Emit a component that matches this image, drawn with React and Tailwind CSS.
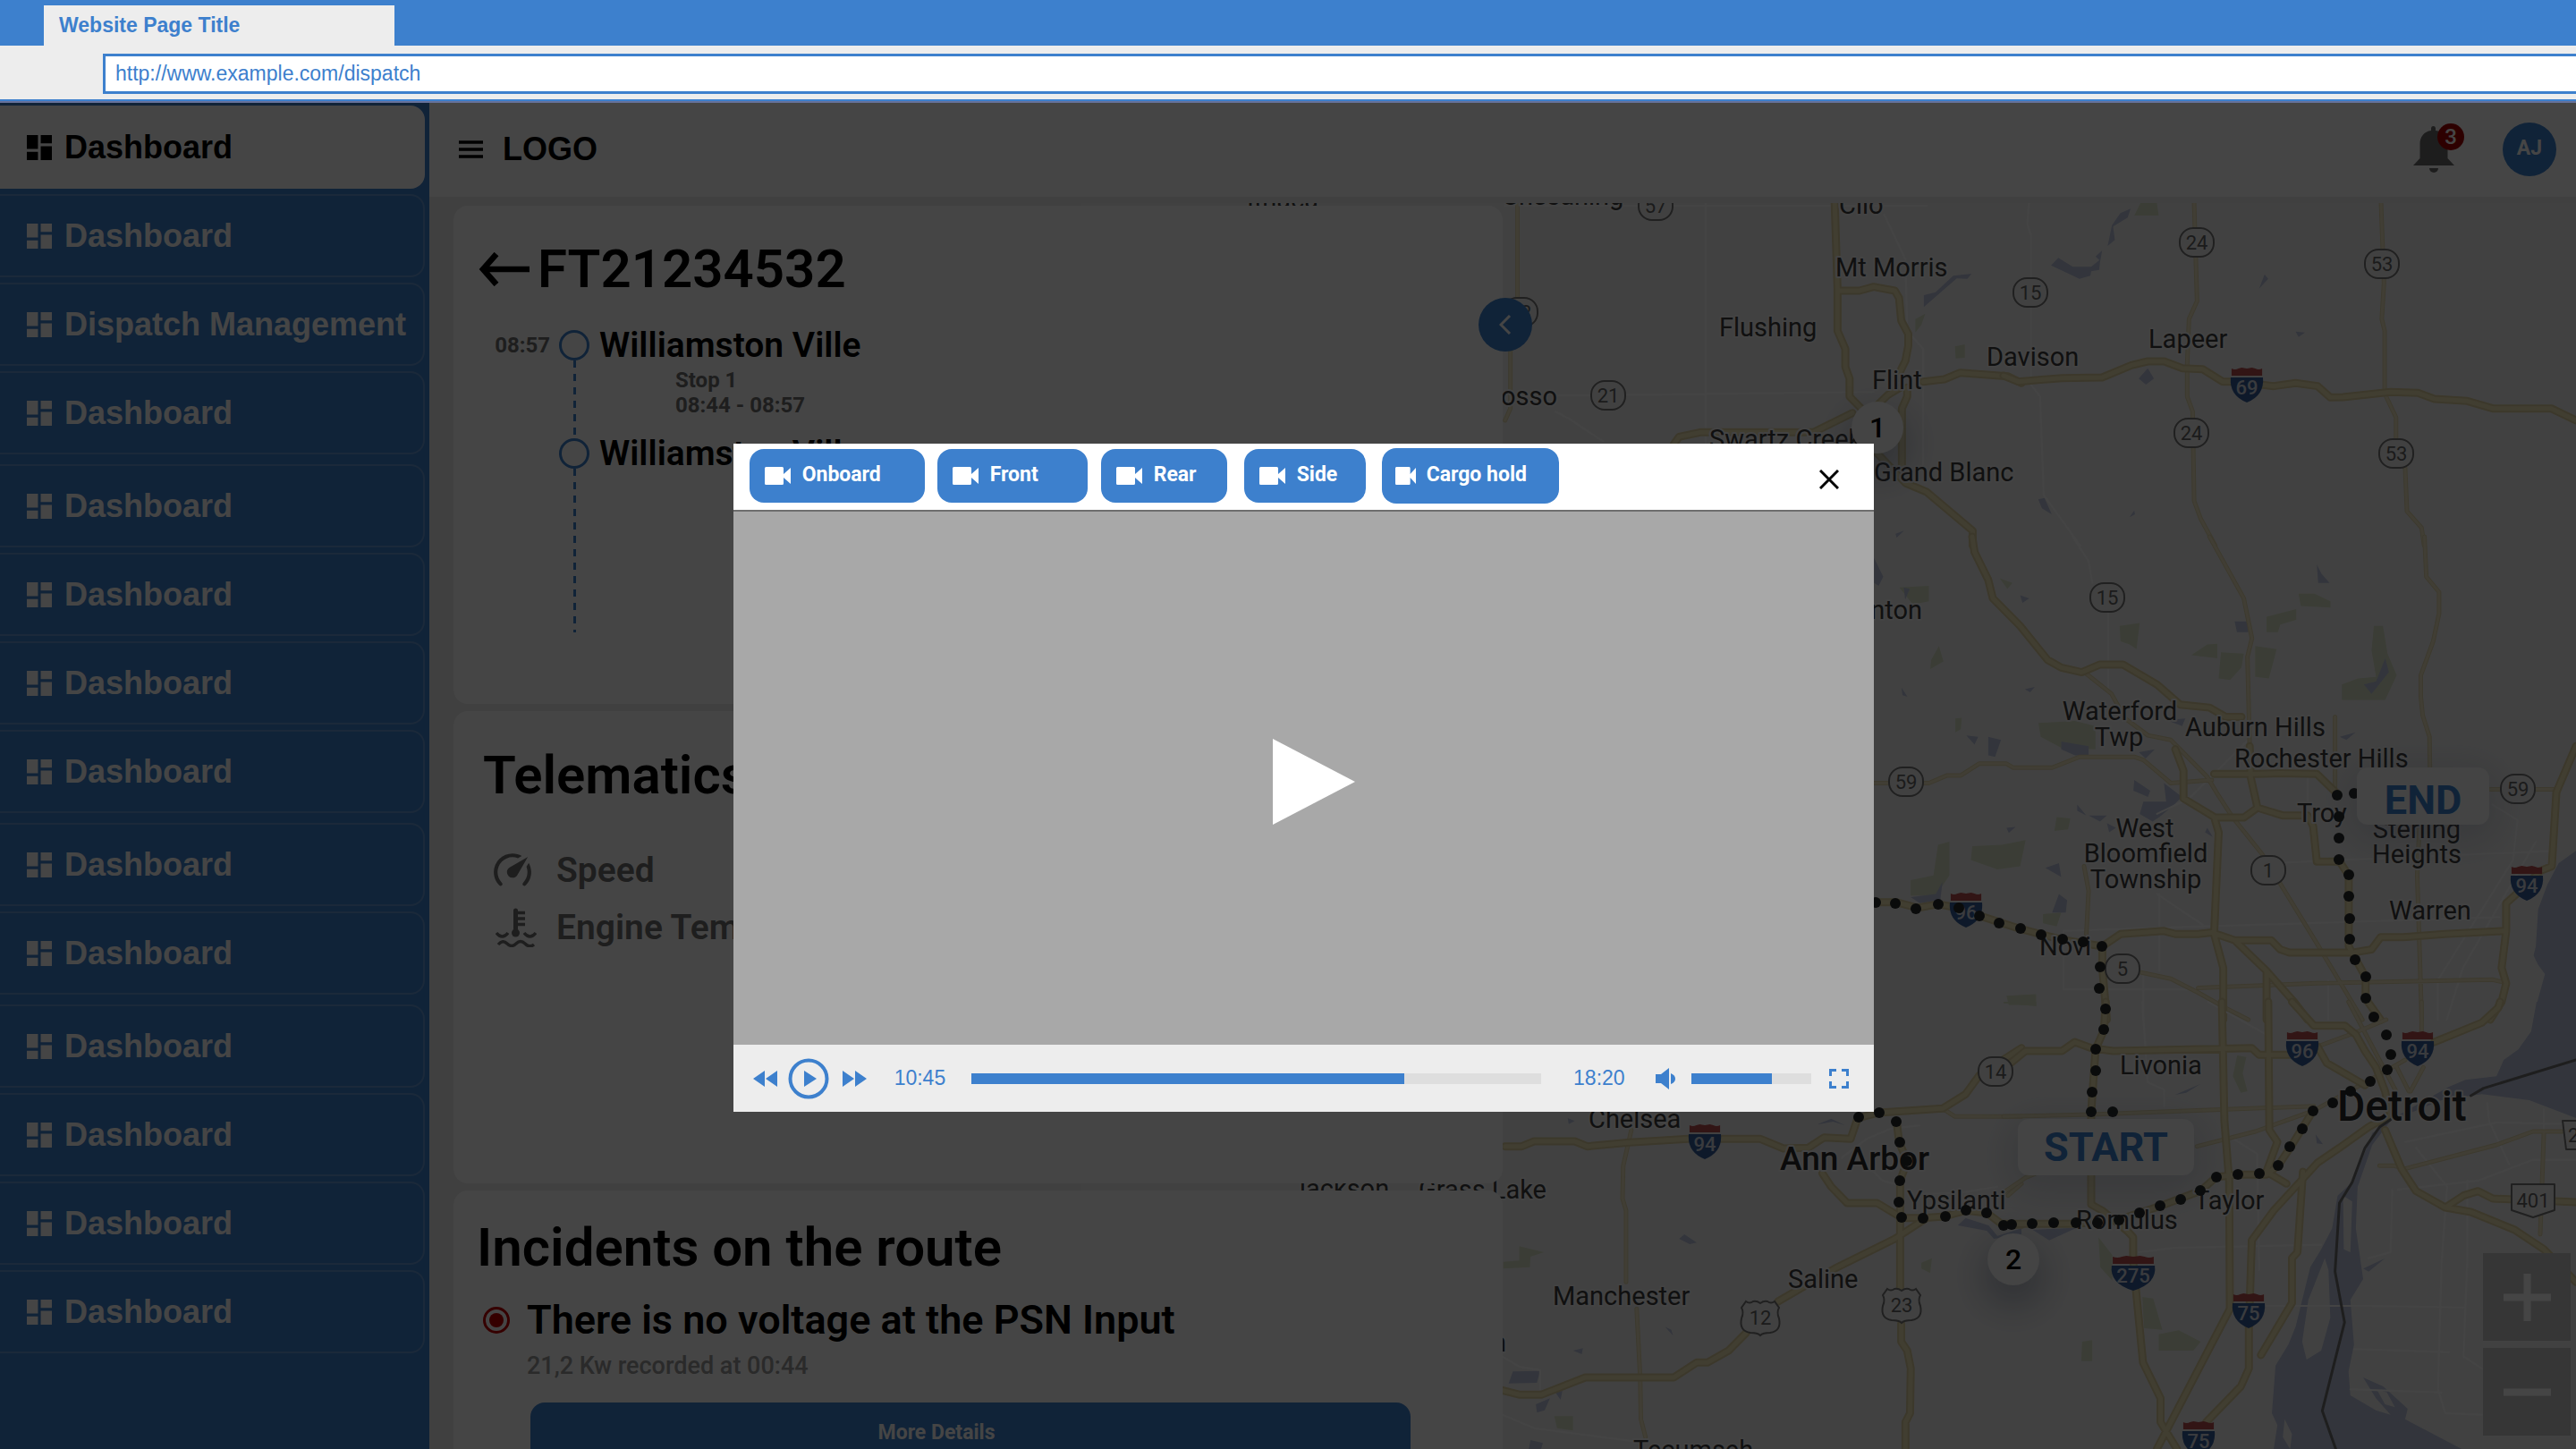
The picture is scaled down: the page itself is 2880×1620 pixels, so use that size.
import React from "react";

const NAV_GROUPS = [
  ["Dashboard", "Dashboard", "Dispatch Management", "Dashboard"],
  ["Dashboard", "Dashboard", "Dashboard", "Dashboard"],
  ["Dashboard", "Dashboard"],
  ["Dashboard", "Dashboard", "Dashboard", "Dashboard"],
];

const CAMERAS = [
  { name: "Onboard", box: "ml-[18px] w-[196px] h-[60px] pl-[17px] gap-[13px]", icon: "w-[29px]" },
  { name: "Front", box: "ml-[14px] w-[168px] h-[60px] pl-[17px] gap-[13px]", icon: "w-[29px]" },
  { name: "Rear", box: "ml-[15px] w-[141px] h-[60px] pl-[17px] gap-[13px]", icon: "w-[29px]" },
  { name: "Side", box: "ml-[19px] w-[136px] h-[60px] pl-[17px] gap-[13px]", icon: "w-[29px]" },
  { name: "Cargo hold", box: "ml-[18px] w-[198px] h-[62px] pl-[15px] gap-[12px]", icon: "w-[23px]" },
];

/* ---------- icons ---------- */

function DashboardIcon() {
  return (
    <svg viewBox="0 0 18 18" className="size-7 shrink-0" fill="currentColor" aria-hidden="true">
      <path d="M0 10h8V0H0v10zm0 8h8v-6H0v6zm10 0h8V8h-8v10zm0-18v6h8V0h-8z" />
    </svg>
  );
}

function CameraIcon({ className }) {
  return (
    <svg viewBox="0 0 29 20" preserveAspectRatio="none" className={className} fill="currentColor" aria-hidden="true">
      <path d="M1.500 0h18a1.500 1.500 0 0 1 1.500 1.500V8l8-7v18l-8-7v6.500a1.500 1.500 0 0 1-1.500 1.500h-18A1.500 1.500 0 0 1 0 18.500v-17A1.500 1.500 0 0 1 1.500 0z" />
    </svg>
  );
}

function SpeedIcon() {
  return (
    <svg viewBox="1 2 22 20" className="h-[42px] w-[46px]" fill="currentColor" aria-hidden="true">
      <path d="M12,16A3,3 0 0,1 9,13C9,11.88 9.61,10.9 10.5,10.39L20.21,4.77L14.68,14.35C14.18,15.33 13.17,16 12,16M12,3C13.81,3 15.5,3.5 16.97,4.32L14.87,5.53C14,5.19 13,5 12,5A8,8 0 0,0 4,13C4,15.21 4.89,17.21 6.34,18.65H6.35C6.74,19.04 6.74,19.67 6.35,20.06C5.96,20.45 5.32,20.45 4.93,20.07C3.12,18.26 2,15.76 2,13A10,10 0 0,1 12,3M22,13C22,15.76 20.88,18.26 19.07,20.07C18.68,20.45 18.05,20.45 17.66,20.06C17.27,19.67 17.27,19.04 17.66,18.65C19.11,17.2 20,15.21 20,13C20,12 19.81,11 19.46,10.1L20.67,8C21.5,9.5 22,11.18 22,13Z" />
    </svg>
  );
}

function CoolantIcon() {
  return (
    <svg viewBox="0 0 46 44" className="h-[44px] w-[46px]" fill="none" stroke="currentColor" aria-hidden="true">
      <path d="M22.500 3v24" strokeWidth="5" strokeLinecap="round" />
      <path d="M25 5.500h8M25 12h8M25 18.500h8" strokeWidth="3.500" />
      <circle cx="22.500" cy="28" r="4.500" fill="currentColor" stroke="none" />
      <path d="M1 28q3 4 6.500 4t6.500-4M32 28q3 4 6.500 4t6.500-4" strokeWidth="3.500" />
      <path d="M3 41q5-6 10 -1t10 0t10 0t10 1" strokeWidth="3.500" />
    </svg>
  );
}

function BellIcon() {
  return (
    <svg viewBox="0 0 46 52" className="h-[52px] w-[46px]" fill="#6b6b6b" aria-hidden="true">
      <path d="M20 5V3a2.500 3 0 0 1 5 0v2c8 1 13.500 7 13.500 15v16L46 44H0l7.500-8V20C7.500 12 12 6 20 5z" />
      <path d="M18 47h10a5 5 0 0 1-10 0z" />
    </svg>
  );
}

/* ---------- map ---------- */

const TILES = [
  {
    transform: "translate(1640 110) scale(.39541 .33333)",
    water: "M1292 700V660L1325 650L1375 595L1427 588L1415 605L1385 604Z M1212 1460L1236 1450L1215 1474Z",
    parks: "M1268 740L1296 722L1285 760L1268 785Z M1380 832L1408 825V870L1382 872Z",
    local: "M108 360H1300 M675 351V1155 M250 997L1150 985 M1180 390L1240 540L1245 780L1290 840V1230 M250 1050L290 1075L385 1150",
    minor: "M143 351V680L123 850V1040L108 1080",
    major:
      "M1040 351L1048 640V780L1070 840V900L1082 940V1000L1115 1040L1160 1100 M1048 645H1110L1150 632L1210 645L1222 670L1228 745L1248 790V830L1240 880L1215 940 M585 1160L600 1135L660 1120H980L1090 1055 M1160 1030L1190 995L1225 970 M1245 970V1000L1230 1040V1230 M1290 950L1350 942L1395 920L1530 932L1568 955 M1160 1190L1240 1290L1300 1320L1430 1450V1500",
  },
  {
    transform: "translate(2240 110) scale(.40816 .33333)",
    water:
      "M130 560L150 535L190 565H240L265 540L262 575L240 580L238 595L208 605Z M348 370L320 385L297 425L285 495L305 475L300 430L340 400Z M270 510L265 545L252 530Z M395 905L412 940L390 960L370 940Z M95 1345L112 1340L132 1395L105 1375Z M715 590L725 605L700 638Z M800 782L826 785L808 800Z M345 1405L358 1382L360 1395Z",
    parks: "M375 351H420L425 393L358 393Z",
    local: "M70 351L65 420L75 460V960L100 1000L110 1330L210 1500",
    minor:
      "M522 351L530 680L508 740L503 890V1000L518 1050L522 1350L540 1410L580 1500 M1034 351L1042 620L1036 740L1044 780V990L1075 1070V1150L1100 1240L1105 1385L1145 1440L1152 1500",
    major:
      "M0 930L40 950L160 938L270 936L350 895L395 882H440L490 905L545 908L600 950H640L740 965L800 955L860 965L895 1003L930 1002L1060 985L1135 988L1180 1008L1270 1015L1340 1040H1500L1568 1080",
  },
  {
    transform: "translate(2080 600) scale(.5102 .34439)",
    water:
      "M1568 1020L1530 1060L1505 1130L1485 1210L1480 1330L1475 1360L1485 1390L1500 1420L1485 1500L1475 1568H1568Z M30 70L50 130L40 160L30 150Z M820 275H850V310H825Z M1000 90L1010 120L1028 150L1003 150Z M435 1160L453 1180L450 1220L420 1220Z M600 790L635 825L630 845L598 825Z M665 800L705 845L680 880L655 910L640 925L612 900L620 860L670 860Z M440 665L500 680V710H470L440 690Z M280 650L308 660L295 715L280 710Z M610 700L645 690L625 720Z M670 595L712 590L705 615Z M475 870L495 905L475 890Z M500 905L540 905L525 925Z M760 945L772 975L755 960Z M405 1075L435 1060L440 1105Z M90 490L103 520L92 515Z M360 495L382 488L372 505Z M350 190L370 200L355 215Z M232 645L258 650L250 675Z M320 945L340 942L325 962Z M540 930L560 945L545 960Z M1050 650L1085 635L1065 660Z M95 165L108 170L98 205Z",
    parks:
      "M85 165L150 160V210L115 220Z M390 605L470 598L515 615V690L440 685L395 650Z M568 290L612 280L605 365L590 350L570 340Z M960 185H995L1030 210V230L965 225Z M890 260L955 235V270L920 285L915 310L890 310Z M725 385L760 350L782 348V395Z M790 375L840 380L835 425L810 465L785 460Z M865 355L912 365L905 405L895 460L865 455Z M1125 290H1145L1155 380L1175 450L1150 530L1055 530V480L1090 460L1130 455L1120 370Z M245 1005L310 1000L362 985L350 1070L300 1080L242 1050Z M110 1115L160 1100L170 1000L195 990V1100L165 1165L110 1165Z M320 1490L385 1485V1520L325 1520Z M155 400L172 355L182 405L153 430Z M400 1225L440 1220L430 1265L400 1255Z M430 910L460 915L455 950L425 955Z M305 135L333 150L322 170Z M208 590L222 588L220 625L208 635Z",
    lakes: "M1150 395L1158 440L1120 510L1103 480L1130 470Z M110 1170L165 1160L180 1120L175 1180L130 1190Z",
    local:
      "M465 0L500 80L508 150 M543 245V500 M900 1060L1520 1020 M445 1280L1400 1235 M445 1470H740 M445 1280V1470 M655 1160V1410 M620 1410V1568 M650 1160L750 1260 M1385 870L1440 920L1430 1050L1265 1440V1568 M1480 990L1320 1400L1285 1568 M980 770V860 M1025 1440V1568 M850 660L720 850L650 900",
    minor:
      "M765 0L840 200L858 330L848 390L853 680 M1236 0L1240 130L1268 180V250L1255 340L1228 450V520L1232 580L1247 650L1248 760L1225 940L1220 1100L1230 1568 M30 800H150L190 775H220L260 737H320L335 750H420L480 715H600L620 725L680 800L770 790 M495 445L550 510L580 590L630 645L680 660L760 780L780 830L815 910L880 1030L1000 1320L1100 1568 M1040 585V830 M490 1070L500 1150L495 1290 M600 1410L680 1435L740 1480L800 1530L850 1568 M740 1465L1000 1450L1385 1438L1405 1445 M1380 820H1530",
    major:
      "M245 0L250 50L280 140L290 200L350 290L410 400L440 425L485 440L525 415H575L650 480L700 545L765 555L800 585H835 M690 690L708 760V850L775 910L785 960L775 1290L795 1400V1568 M775 770H870L920 768L1000 770L1045 835 M853 680L855 780L870 880L925 905H980L992 940L1000 1055H1050L1070 1100V1330L1107 1430V1500L1140 1568 M775 912H840L870 880 M530 1330L570 1290L665 1280L690 1290H740L770 1285L820 1310H900L920 1340L940 1350H1080L1120 1340L1140 1300H1190L1280 1290L1410 1280 M820 1310L890 1410L950 1510L980 1568 M890 1410V1568 M1568 680L1525 830L1515 1070L1490 1085L1460 1130L1415 1190V1280L1405 1400L1415 1450L1405 1510L1380 1568 M30 1187H80L125 1205L170 1193L215 1205L260 1230L350 1273L440 1308L530 1330V1400L540 1568",
  },
  {
    transform: "translate(1640 1140) scale(.39541 .33333)",
    water:
      "M130 1180L207 1178L198 1218L118 1220Z M195 1290L235 1270L220 1310L198 1318Z M250 1250L270 1245L265 1275Z M600 735L615 720L650 748L630 753Z M300 1110L328 1102L325 1122Z M560 1030L578 1040L583 1060Z M1388 690L1410 665L1475 690L1500 725L1568 700V720L1490 735L1470 708Z M180 1410L215 1420L210 1440H175Z M285 330L305 340L288 350Z M990 352L1030 332L1070 355L1035 342Z",
    parks: "M148 760L218 780L180 795L178 830L103 835V812L148 808Z M247 1330H300V1378L255 1370Z M1285 815L1315 800L1310 850L1285 835Z",
    local:
      "M1060 463L1130 400L1200 365L1280 355 M1150 510L1175 540L1215 553 M1290 585L1400 580L1500 560 M100 1130L150 1165L207 1175V1240 M100 1325L190 1370L480 1415",
    minor: "M465 370L442 490L440 600L450 640V880 M480 970L490 1200L492 1340L505 1400 M1345 298L1380 325H1568 M1530 590L1568 550",
    major:
      "M108 425H155L190 408H305L340 425L460 412L625 400H830L895 432L965 430L1010 395L1085 400L1105 330L1165 312L1345 298L1410 250L1450 185L1568 95 M1005 515L1030 560L1075 615H1160L1230 665H1290L1350 660L1410 640L1470 648L1515 688H1568 M1215 340L1222 410L1245 475L1225 540V900 M1228 1020V1080L1245 1110L1255 1170L1253 1320L1240 1350V1440 M1300 665L1210 735L1040 835L880 945 M790 1050L740 1110L680 1150H650L585 1200H335L210 1258H150L100 1243",
  },
  {
    transform: "translate(2240 1120) scale(.40816 .33333)",
    water:
      "M1460 0L1445 100L1410 160L1370 195L1350 250L1265 262L1220 285L1060 395L1010 440L960 600L915 650L900 760L870 830L840 890L800 1090L780 1150L745 1220L740 1300L735 1380L750 1420L740 1500H1255L1100 1400L1020 1370L950 1320L945 1240L960 1150L950 1000L985 930L965 760L970 620L1010 480L1060 400L1200 330L1310 310L1440 330L1568 390V0Z M985 1260L1040 1290L1107 1365L1100 1400L1060 1385L1020 1330Z M80 765L200 758L125 800Z M470 312L540 275L500 305Z M985 895L1045 860L1000 905Z M855 445L875 478L858 475Z",
    land: "M930 650L955 670L950 840L932 830Z M880 860L890 900L895 1060L870 1170L830 1200L818 1140L835 1000Z M1022 1300L1050 1310L1072 1360L1045 1350Z M770 1400L790 1450L785 1500L765 1460Z",
    parks:
      "M260 790L298 850V935L265 890Z M640 180L665 185L655 240L668 300L650 305L628 250Z M380 990L410 995L435 1100L385 1095Z M425 1115L480 1102L540 1140L520 1170L425 1170Z M215 1140L243 1135V1205L213 1205Z M750 1220L775 1250L780 1300L793 1330L775 1370L755 1360Z M0 0H90V15L0 5Z",
    local:
      "M380 0L395 270L440 295V350 M560 0L720 110 M370 840L470 825L870 815 M720 1020H1000L1260 1025 M1325 340L1330 400L1385 545 M1100 470L1350 405L1568 410 M1130 490L1215 620L1200 870L1190 1300L1210 1380L1310 1385 M1080 630L1300 600L1450 530H1568 M1270 600V870L1260 1190L1310 1230 M960 1165L1220 1175 M950 1300L1200 1310 M1480 360V440 M1000 860L1060 840L1065 630 M630 460L695 510L700 900",
    minor:
      "M0 385L240 378L850 350 M530 485L690 435L850 365L1052 229L1100 195 M0 640L60 590L90 575 M945 0L1075 300 M1048 60L960 105L860 150 M1145 0V110 M1150 220L1115 300 M1075 215L1110 300 M1030 550H1070L1100 560L1350 480L1450 435H1530 M1480 440L1470 780",
    major:
      "M0 225L60 165H160L195 135L240 155L300 165L680 155L700 178H790L860 150L885 205L990 280 M598 0L605 400L618 600L620 1030L420 1500 M725 0L728 430L750 470L720 570L775 610 M280 0L275 95L252 160L240 370V680L270 700L340 770L355 790V870L382 1210L430 1330V1410L475 1500 M0 745H200L315 731L430 685L540 634L582 588L640 580H720L753 548L790 480L848 365 M790 0L850 80H935L965 110L990 165L1020 220L1045 300L1060 380L1000 420L920 490L860 540L740 700L680 800L672 1095V1230L650 1290L555 1410 M1180 135L1250 100L1310 70L1355 20L1360 0 M1045 430L1090 560L1130 635L1210 690L1260 650L1300 635L1340 660L1568 672 M1210 690L1280 705L1400 765L1480 830L1568 940 M820 570L805 840L790 860V1010L705 1185",
    border: "M1568 195L1315 290L1280 315 M1060 395L1030 420L990 490L955 605L920 675L908 905L934 1075L873 1372L910 1500",
  },
];

const ROUTE = [
  [2097, 1009], [2119, 1010], [2142, 1016], [2167, 1011], [2190, 1015], [2213, 1024], [2235, 1032], [2259, 1038],
  [2282, 1045], [2306, 1050], [2329, 1053], [2350, 1058], [2348, 1081], [2347, 1105], [2354, 1128], [2352, 1151],
  [2343, 1173], [2343, 1197], [2339, 1221], [2338, 1243], [2362, 1243], [2613, 889], [2632, 887], [2615, 913],
  [2615, 937], [2615, 961], [2626, 978], [2626, 1002], [2627, 1027], [2627, 1050], [2633, 1073], [2645, 1092],
  [2645, 1116], [2654, 1137], [2668, 1157], [2673, 1179], [2669, 1196], [2650, 1209], [2628, 1220], [2608, 1233],
  [2586, 1242], [2574, 1262], [2560, 1282], [2547, 1303], [2526, 1312], [2502, 1313], [2478, 1316], [2460, 1331],
  [2438, 1341], [2415, 1348], [2392, 1356], [2369, 1364], [2345, 1367], [2321, 1367], [2296, 1367], [2272, 1368],
  [2249, 1369], [2240, 1370], [2221, 1356], [2198, 1353], [2175, 1360], [2150, 1362], [2126, 1361], [2123, 1344],
  [2124, 1320], [2132, 1298], [2124, 1277], [2120, 1254], [2101, 1244], [2078, 1249],
];

const PLACES = [
  ["Chesaning", 1679, 229], ["Clio", 2056, 239], ["Mt Morris", 2052, 309], ["Flushing", 1922, 376],
  ["Owosso", 1741, 453, "end"], ["Flint", 2093, 435], ["Swartz Creek", 1911, 501], ["Grand Blanc", 2095, 538],
  ["Davison", 2221, 409], ["Lapeer", 2402, 389], ["Fenton", 2149, 692, "end"], ["Waterford", 2370, 805, "middle"],
  ["Twp", 2369, 834, "middle"], ["Auburn Hills", 2443, 823], ["Rochester Hills", 2498, 858],
  ["West", 2398, 936, "middle"], ["Bloomfield", 2399, 964, "middle"], ["Township", 2399, 993, "middle"],
  ["Troy", 2568, 919], ["Sterling", 2702, 937, "middle"], ["Heights", 2702, 965, "middle"], ["Warren", 2671, 1028],
  ["Novi", 2280, 1068], ["Chelsea", 1776, 1261], ["Ypsilanti", 2132, 1352], ["Grass Lake", 1729, 1340, "end"],
  ["Jackson", 1444, 1339], ["Saline", 1999, 1440], ["Manchester", 1736, 1459], ["Tecumseh", 1826, 1631],
  ["Livonia", 2370, 1201], ["Taylor", 2453, 1352], ["Romulus", 2321, 1374], ["Brooklyn", 1684, 1511, "end"],
  ["Ithaca", 1394, 233],
];

const STATE_ROADS = [
  ["57", 1851, 230], ["52", 1700, 349], ["21", 1798, 442], ["24", 2456, 271], ["53", 2663, 295], ["15", 2270, 327],
  ["24", 2450, 484], ["53", 2679, 507], ["15", 2356, 668], ["59", 2131, 874], ["59", 2815, 882], ["1", 2536, 973],
  ["5", 2373, 1083], ["14", 2231, 1198],
];

const US_ROADS = [["12", 1968, 1473], ["23", 2126, 1459]];

const INTERSTATES = [
  ["69", 2512, 431], ["96", 2198, 1018], ["94", 2825, 988], ["94", 1906, 1277], ["96", 2574, 1173],
  ["94", 2703, 1173], ["275", 2385, 1424], ["75", 2514, 1466], ["75", 2458, 1609],
];

function MapCanvas() {
  return (
    <svg
      viewBox="1209 227 1671 1393"
      preserveAspectRatio="xMaxYMin slice"
      className="block h-full w-full font-[Roboto,sans-serif]"
      role="img"
      aria-label="Route map around Detroit"
    >
      <rect x="1209" y="227" width="1671" height="1393" fill="#f1f1f1" />
      {TILES.map((t) => (
        <g key={t.transform} transform={t.transform} fill="none" strokeLinejoin="round" strokeLinecap="round">
          <path d={t.parks} fill="#d9e2c6" />
          <path d={t.water} fill="#bcc4dd" />
          {t.lakes && <path d={t.lakes} fill="#bcc4dd" />}
          {t.land && <path d={t.land} fill="#f1f1f1" />}
          <path d={t.local} stroke="#fbfbfb" strokeWidth="2" vectorEffect="non-scaling-stroke" />
          <path d={t.minor} stroke="#dfd4ab" strokeWidth="5" vectorEffect="non-scaling-stroke" />
          <path d={t.minor} stroke="#efe6c2" strokeWidth="3" vectorEffect="non-scaling-stroke" />
          <path d={t.major} stroke="#dccf9e" strokeWidth="9" vectorEffect="non-scaling-stroke" />
          <path d={t.major} stroke="#efe4b6" strokeWidth="5" vectorEffect="non-scaling-stroke" />
          {t.border && <path d={t.border} stroke="#707070" strokeWidth="3" vectorEffect="non-scaling-stroke" />}
        </g>
      ))}

      {STATE_ROADS.map(([n, x, y]) => (
        <g key={n + x} transform={`translate(${x} ${y})`}>
          <rect x="-19" y="-16" width="38" height="32" rx="15" fill="#f1f1f1" stroke="#777" strokeWidth="2" />
          <text y="8" textAnchor="middle" fontSize="22" fill="#666">{n}</text>
        </g>
      ))}
      {US_ROADS.map(([n, x, y]) => (
        <g key={n} transform={`translate(${x} ${y})`}>
          <path
            d="M-16-18q4 3 8 0q4-1 8 2q4-3 8-2q4 3 8 0l5 7q-3 5 0 12q3 14-10 16q-8 0-11 3q-3-3-11-3q-13-2-10-16q3-7 0-12z"
            fill="#f1f1f1"
            stroke="#777"
            strokeWidth="2"
          />
          <text y="8" textAnchor="middle" fontSize="22" fill="#666">{n}</text>
        </g>
      ))}
      {INTERSTATES.map(([n, x, y]) => (
        <g key={n + x} transform={`translate(${x} ${y})`}>
          <g transform={n.length > 2 ? "scale(1.34 1)" : undefined}>
            <path d="M-18-19q4 2 8 0l4-1l6 1l6-1l4 1q4 2 8 0v8h-36z" fill="#b94e4e" transform="scale(.95 1)" />
            <path d="M-18-9h36q2 20-18 28q-20-8-18-28z" fill="#365f9c" />
          </g>
          <text y="10" textAnchor="middle" fontSize="22" fontWeight="500" fill="#d5dbe5">{n}</text>
        </g>
      ))}
      <g transform="translate(2832 1342)">
        <path d="M-24-18h48v29l-24 8l-24-8z" fill="#f1f1f1" stroke="#777" strokeWidth="2" strokeLinejoin="round" />
        <text y="8" textAnchor="middle" fontSize="22" fill="#666">401</text>
      </g>
      <g transform="translate(2880 1269)">
        <path d="M-15-16h30l-4 32h-22z" fill="#f1f1f1" stroke="#777" strokeWidth="2" strokeLinejoin="round" />
        <text x="-9" y="8" fontSize="22" fill="#666">2</text>
      </g>

      <g fill="#3d3d3d" stroke="#f6f6f6" strokeWidth="4" strokeLinejoin="round" style={{ paintOrder: "stroke" }}>
        {PLACES.map(([name, x, y, anchor]) => (
          <text key={name} x={x} y={y} textAnchor={anchor} fontSize="29">{name}</text>
        ))}
        <text x="1990" y="1308" fontSize="37" fontWeight="500" fill="#2a2a2a">Ann Arbor</text>
        <text x="2613" y="1253" fontSize="48" fontWeight="500" fill="#2a2a2a">Detroit</text>
      </g>
      <g fill="#262a2a">
        {ROUTE.map(([x, y]) => (
          <circle key={`${x}-${y}`} cx={x} cy={y} r="6" />
        ))}
      </g>
    </svg>
  );
}

const PIN = "absolute flex items-center justify-center bg-[#f9f9f9]";
const STOP_PIN = "size-[58px] rounded-full text-[32px] font-medium text-black shadow-[0_18px_44px_4px_rgba(60,75,110,0.4)]";
const END_PIN = "rounded-xl text-[45px] font-bold text-[#3d80cd] shadow-[0_10px_44px_8px_rgba(80,95,130,0.2)]";

function MapPins() {
  return (
    <>
      <span className={`${PIN} ${STOP_PIN} right-[752px] top-[222px]`}>1</span>
      <span className={`${PIN} ${STOP_PIN} right-[600px] top-[1152px]`}>2</span>
      <span className={`${PIN} ${END_PIN} right-[427px] top-[1024px] h-[63px] w-[197px]`}>START</span>
      <span className={`${PIN} ${END_PIN} right-[97px] top-[631px] h-[64px] w-[148px] pt-[10px]`}>END</span>
      <div className="absolute right-[6px] top-[1174px] flex flex-col gap-2">
        <button aria-label="Zoom in" className="flex size-[98px] items-center justify-center bg-[#c6c6c6]">
          <svg viewBox="0 0 53 53" className="size-[53px]" stroke="#fff" strokeWidth="8"><path d="M26.500 0v53M0 26.500h53" /></svg>
        </button>
        <button aria-label="Zoom out" className="flex size-[98px] items-center justify-center bg-[#c6c6c6]">
          <svg viewBox="0 0 53 53" className="size-[53px]" stroke="#fff" strokeWidth="8"><path d="M0 26.500h53" /></svg>
        </button>
      </div>
    </>
  );
}

/* ---------- page parts ---------- */

function BrowserBar() {
  return (
    <div className="shrink-0 font-['Liberation_Sans',Arial,sans-serif] text-[#3d80cd]">
      <div className="flex bg-[#3d80cd] pl-[49px] pt-[6px]">
        <div className="h-[45px] w-[392px] bg-[#ededed] pl-[17px] text-[23px] font-bold leading-[45px]">Website Page Title</div>
      </div>
      <div className="bg-[#ededed] pb-[6px] pl-[115px] pt-[9px]">
        <input
          aria-label="Address"
          defaultValue="http://www.example.com/dispatch"
          className="block h-[45px] w-full border-[3px] border-r-0 border-[#3d80cd] bg-white pl-[11px] text-[23px]"
        />
      </div>
      <div className="h-[2px] bg-[#3d80cd]" />
    </div>
  );
}

function Sidebar() {
  return (
    <nav className="flex w-[480px] shrink-0 flex-col gap-[11px] bg-[#3d80cd] pt-[5px] font-['Liberation_Sans',Arial,sans-serif]">
      {NAV_GROUPS.map((group, g) => (
        <div key={g} className="flex flex-col gap-[6px]">
          {group.map((label, i) => (
            <a
              key={i}
              href="#"
              className={
                g === 0 && i === 0
                  ? "mr-[5px] flex h-[93px] items-center gap-[14px] rounded-r-2xl bg-white pl-[30px] text-[36px] font-bold text-black"
                  : "mr-[5px] flex h-[93px] items-center gap-[14px] rounded-r-2xl border-2 border-l-0 border-white/20 pl-[30px] text-[36px] font-bold text-white"
              }
            >
              <DashboardIcon />
              <span className="whitespace-nowrap">{label}</span>
            </a>
          ))}
        </div>
      ))}
    </nav>
  );
}

function Header() {
  return (
    <header className="flex h-[107px] shrink-0 items-center bg-white pl-[33px] pr-[22px]">
      <button aria-label="Menu">
        <svg viewBox="0 0 27 20" className="h-5 w-[27px]" stroke="#000" strokeWidth="3.500"><path d="M0 2h27M0 10h27M0 18h27" /></svg>
      </button>
      <span className="ml-[22px] font-['Liberation_Sans',Arial,sans-serif] text-[36px] font-bold">LOGO</span>
      <button aria-label="Notifications" className="relative ml-auto mr-[54px]">
        <BellIcon />
        <span className="absolute left-[27px] top-[-3px] flex size-[30px] items-center justify-center rounded-full bg-[#a80000] text-[24px] font-medium text-white">3</span>
      </button>
      <button aria-label="Account" className="size-[60px] rounded-full bg-[#3d80cd] text-[23px] font-bold text-white">AJ</button>
    </header>
  );
}

const DASHES = "w-[3px] flex-1 bg-[repeating-linear-gradient(to_bottom,#3d80cd_0_8px,transparent_8px_15px)]";

function Stop({ time, children, className }) {
  return (
    <li className={`flex ${className}`}>
      <span className="w-[108px] text-right text-[24px] font-bold leading-[34px] text-[#707070]">{time}</span>
      <span className="ml-[10px] flex w-[34px] flex-col items-center">
        <span className="size-[34px] shrink-0 rounded-full border-[3px] border-[#3d80cd]" />
        <span className={DASHES} />
      </span>
      <div className="ml-[11px]">
        <p className="text-[39px] font-semibold leading-[34px]">Williamston Ville</p>
        {children}
      </div>
    </li>
  );
}

function RouteCard() {
  return (
    <section className="h-[557px] shrink-0 rounded-2xl bg-white pt-[35px]">
      <h1 className="flex items-center gap-[9px] pl-[28px] text-[60px] font-semibold leading-[72px]">
        <button aria-label="Back">
          <svg viewBox="0 0 57 38" className="h-[38px] w-[57px]" fill="none" stroke="#000" strokeWidth="6.500"><path d="M20 2L5 19l15 17M4 19h53" /></svg>
        </button>
        FT21234532
      </h1>
      <ul className="mt-[32px]">
        <Stop time="08:57" className="h-[121px]">
          <p className="mt-2 pl-[85px] text-[24px] font-bold leading-7 text-[#707070]">
            Stop 1<br />08:44 - 08:57
          </p>
        </Stop>
        <Stop className="h-[217px]" />
      </ul>
    </section>
  );
}

function TelematicsCard() {
  return (
    <section className="h-[528px] shrink-0 rounded-2xl bg-white pt-[36px]">
      <h2 className="pl-[33px] text-[60px] font-semibold leading-[72px]">Telematics</h2>
      <ul className="mt-[38px] text-[39px] font-semibold text-[#707070]">
        <li className="flex h-16 items-center gap-[22px] pl-[47px]">
          <span className="-ml-1 mr-1"><SpeedIcon /></span> Speed
        </li>
        <li className="flex h-16 items-center gap-[22px] pl-[47px]">
          <CoolantIcon /> Engine Temperature
        </li>
      </ul>
    </section>
  );
}

function IncidentsCard() {
  return (
    <section className="shrink-0 rounded-2xl bg-white px-[26px] pb-8 pt-[28px]">
      <h2 className="text-[60px] font-semibold leading-[72px]">Incidents on the route</h2>
      <div className="mt-[19px] flex items-center gap-[19px] pl-[7px]">
        <svg viewBox="0 0 30 30" className="size-[30px]" aria-hidden="true">
          <circle cx="15" cy="15" r="13.500" fill="none" stroke="#c40000" strokeWidth="3" />
          <circle cx="15" cy="15" r="8" fill="#c40000" />
        </svg>
        <h3 className="text-[45px] font-semibold leading-[52px]">There is no voltage at the PSN Input</h3>
      </div>
      <p className="mt-[9px] pl-[56px] text-[27px] font-medium leading-8 text-[#9a9a9a]">21,2 Kw recorded at 00:44</p>
      <button className="ml-[60px] mt-[25px] block h-[68px] w-[984px] max-w-full rounded-2xl bg-[#3d80cd] pr-[76px] text-[23px] font-bold text-white">
        More Details
      </button>
    </section>
  );
}

function VideoModal() {
  return (
    <div role="dialog" aria-label="Camera footage" className="flex w-[1275px] flex-col">
      <div className="flex h-[74px] items-center bg-white pb-[3px]">
        {CAMERAS.map((c) => (
          <button
            key={c.name}
            className={`flex shrink-0 items-center rounded-2xl bg-[#3d80cd] text-[23px] font-bold text-white ${c.box}`}
          >
            <CameraIcon className={`h-5 shrink-0 ${c.icon}`} />
            <span className="whitespace-nowrap">{c.name}</span>
          </button>
        ))}
        <button aria-label="Close" className="ml-auto mr-[39px] mt-[8px]">
          <svg viewBox="0 0 22 22" className="size-[22px]" stroke="#000" strokeWidth="3"><path d="M1 1l20 20M21 1L1 21" /></svg>
        </button>
      </div>
      <div className="flex h-[598px] items-center justify-center border-t-2 border-[#6e6e6e] bg-[#a8a8a8] pl-[24px]">
        <button aria-label="Play video" className="mt-[8px]">
          <svg viewBox="0 0 92 96" className="h-24 w-[92px]" fill="#fff"><path d="M0 0l92 48l-92 48z" /></svg>
        </button>
      </div>
      <div className="flex h-[75px] items-center bg-[#ededed] pl-[22px] pr-[28px] font-['Liberation_Sans',Arial,sans-serif] text-[23px] text-[#3d80cd]">
        <button aria-label="Rewind">
          <svg viewBox="0 0 27 18" className="h-[18px] w-[27px]" fill="currentColor"><path d="M13 0v18L0 9zM27 0v18L14 9z" /></svg>
        </button>
        <button aria-label="Play" className="ml-[12px]">
          <svg viewBox="0 0 46 46" className="size-[46px]">
            <circle cx="23" cy="23" r="20.500" fill="none" stroke="currentColor" strokeWidth="4" />
            <path d="M18 14l14 9l-14 9z" fill="currentColor" />
          </svg>
        </button>
        <button aria-label="Fast forward" className="ml-[15px]">
          <svg viewBox="0 0 27 18" className="h-[18px] w-[27px]" fill="currentColor"><path d="M0 0l13 9L0 18zM14 0l13 9l-13 9z" /></svg>
        </button>
        <span className="ml-[31px]">10:45</span>
        <input
          type="range"
          aria-label="Position"
          defaultValue="76"
          className="ml-[29px] h-3 min-w-0 flex-1 appearance-none bg-[linear-gradient(to_right,#3d80cd_76%,#dedede_76%)] [&::-webkit-slider-thumb]:size-0 [&::-webkit-slider-thumb]:appearance-none"
        />
        <span className="ml-[36px]">18:20</span>
        <svg viewBox="0 0 22 24" className="ml-[34px] h-6 w-[22px]" fill="currentColor" aria-hidden="true">
          <path d="M0 7h6l9-7v24l-9-7H0zM17 6q5 2 5 6t-5 6z" />
        </svg>
        <input
          type="range"
          aria-label="Volume"
          defaultValue="67"
          className="ml-[18px] h-3 w-[134px] appearance-none bg-[linear-gradient(to_right,#3d80cd_67%,#dedede_67%)] [&::-webkit-slider-thumb]:size-0 [&::-webkit-slider-thumb]:appearance-none"
        />
        <button aria-label="Full screen" className="ml-[20px]">
          <svg viewBox="0 0 22 22" className="size-[22px]" fill="none" stroke="currentColor" strokeWidth="3">
            <path d="M1.500 8V1.500H8M14 1.500h6.500V8M20.500 14v6.500H14M8 20.500H1.500V14" />
          </svg>
        </button>
      </div>
    </div>
  );
}

export default function App() {
  return (
    <div className="flex h-screen flex-col overflow-hidden font-[Roboto,sans-serif] text-black">
      <BrowserBar />
      <div className="relative flex min-h-0 flex-1">
        <Sidebar />
        <div className="flex min-w-0 flex-1 flex-col bg-[#ebebeb]">
          <Header />
          <main className="relative min-h-0 flex-1 overflow-hidden pt-[10px]">
            <div className="absolute bottom-0 right-0 top-[7px] w-[1671px]">
              <MapCanvas />
              <MapPins />
            </div>
            <div className="relative flex w-1/2 flex-col gap-[8px] pl-[27px]">
              <RouteCard />
              <TelematicsCard />
              <IncidentsCard />
              <button aria-label="Collapse panel" className="absolute right-[-33px] top-[103px] flex size-[60px] items-center justify-center rounded-full bg-[#3d80cd]">
                <svg viewBox="0 0 14 22" className="h-[22px] w-[14px]" fill="none" stroke="#fff" strokeWidth="3"><path d="M12 1L2 11l10 10" /></svg>
              </button>
            </div>
          </main>
        </div>
        <div className="absolute inset-0 border-t-2 border-[#66719a] bg-black/73 pl-[28.46%] pt-[381px]">
          <VideoModal />
        </div>
      </div>
    </div>
  );
}
